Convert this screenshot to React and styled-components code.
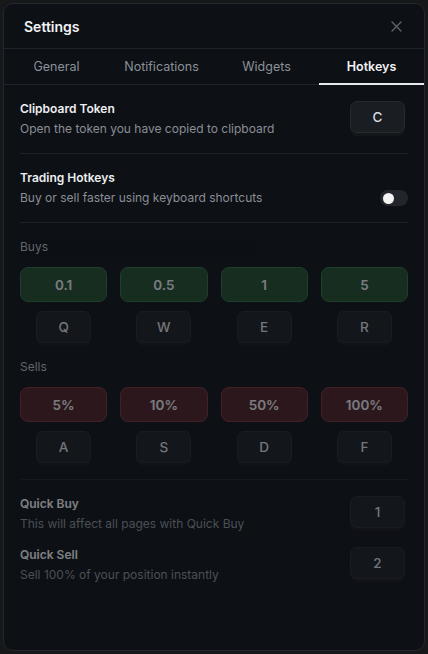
import React, { useState } from "react";
import styled, { createGlobalStyle } from "styled-components";

const GlobalStyle = createGlobalStyle`
    html, body {
        margin: 0;
        padding: 0;
        background: #17181a;
        font-family: Inter, "Noto Sans", sans-serif;
    }
    * {
        box-sizing: border-box;
    }
`;

const buys = [
    { amount: "0.1", key: "Q" },
    { amount: "0.5", key: "W" },
    { amount: "1", key: "E" },
    { amount: "5", key: "R" },
];

const sells = [
    { amount: "5%", key: "A" },
    { amount: "10%", key: "S" },
    { amount: "50%", key: "D" },
    { amount: "100%", key: "F" },
];

const tabs = ["General", "Notifications", "Widgets", "Hotkeys"];

const CloseIcon = () => (
    <svg width="11" height="11" viewBox="0 0 11 11" fill="none">
        <path
            d="M1 1L10 10M10 1L1 10"
            stroke="#62666e"
            strokeWidth="1.3"
            strokeLinecap="round"
        />
    </svg>
);

const App = () => {
    const [tab, setTab] = useState("Hotkeys");
    const [trading, setTrading] = useState(false);

    return (
        <Page>
            <GlobalStyle />
            <Modal>
                <Header>
                    <Title>Settings</Title>
                    <CloseButton>
                        <CloseIcon />
                    </CloseButton>
                </Header>
                <Tabs>
                    {tabs.map((t) => (
                        <Tab
                            key={t}
                            $active={t === tab}
                            onClick={() => setTab(t)}
                        >
                            {t}
                        </Tab>
                    ))}
                </Tabs>
                <Body>
                    <Row>
                        <Text>
                            <RowTitle>Clipboard Token</RowTitle>
                            <RowDesc>
                                Open the token you have copied to clipboard
                            </RowDesc>
                        </Text>
                        <KeyCap $side>C</KeyCap>
                    </Row>
                    <Divider />
                    <Row $end>
                        <Text>
                            <RowTitle>Trading Hotkeys</RowTitle>
                            <RowDesc>
                                Buy or sell faster using keyboard shortcuts
                            </RowDesc>
                        </Text>
                        <Toggle
                            $on={trading}
                            onClick={() => setTrading((p) => !p)}
                        >
                            <Knob />
                        </Toggle>
                    </Row>
                    <Divider />
                    <Dimmed $off={!trading}>
                        <SectionLabel>Buys</SectionLabel>
                        <Grid>
                            {buys.map((b) => (
                                <Cell key={b.key}>
                                    <Amount $kind="buy">{b.amount}</Amount>
                                    <KeyCap>{b.key}</KeyCap>
                                </Cell>
                            ))}
                        </Grid>
                        <SectionLabel>Sells</SectionLabel>
                        <Grid>
                            {sells.map((s) => (
                                <Cell key={s.key}>
                                    <Amount $kind="sell">{s.amount}</Amount>
                                    <KeyCap>{s.key}</KeyCap>
                                </Cell>
                            ))}
                        </Grid>
                        <Divider $top={0} />
                        <QuickRow>
                            <Text>
                                <RowTitle>Quick Buy</RowTitle>
                                <RowDesc>
                                    This will affect all pages with Quick Buy
                                </RowDesc>
                            </Text>
                            <KeyCap $side>1</KeyCap>
                        </QuickRow>
                        <QuickRow>
                            <Text>
                                <RowTitle>Quick Sell</RowTitle>
                                <RowDesc>
                                    Sell 100% of your position instantly
                                </RowDesc>
                            </Text>
                            <KeyCap $side>2</KeyCap>
                        </QuickRow>
                    </Dimmed>
                </Body>
            </Modal>
        </Page>
    );
};

export default App;

const Page = styled.div`
    width: 428px;
    height: 654px;
    padding: 3px;
`;

const Modal = styled.div`
    width: 422px;
    height: 648px;
    background: #0d1015;
    border: 1px solid #22262d;
    border-radius: 10px;
    display: flex;
    flex-direction: column;
    overflow: hidden;
`;

const Header = styled.div`
    height: 45px;
    flex-shrink: 0;
    display: flex;
    align-items: center;
    justify-content: space-between;
    padding: 0 22px 0 20px;
    border-bottom: 1px solid #1f232a;
`;

const Title = styled.h2`
    margin: 0;
    font-size: 14px;
    font-weight: 600;
    color: #f2f3f5;
`;

const CloseButton = styled.button`
    background: none;
    border: none;
    padding: 0;
    display: flex;
    cursor: pointer;
`;

const Tabs = styled.div`
    display: grid;
    grid-template-columns: repeat(4, 1fr);
    height: 36px;
    flex-shrink: 0;
    border-bottom: 1px solid #1f232a;
`;

const Tab = styled.button`
    background: none;
    border: none;
    font-family: inherit;
    font-size: 12.5px;
    font-weight: ${(p) => (p.$active ? 600 : 400)};
    color: ${(p) => (p.$active ? "#f2f3f5" : "#8c9099")};
    border-bottom: 2px solid
        ${(p) => (p.$active ? "#e8e9eb" : "transparent")};
    margin-bottom: -1px;
    padding: 0;
    cursor: pointer;
`;

const Body = styled.div`
    padding: 16px 16px 0 16px;
    display: flex;
    flex-direction: column;
`;

const Row = styled.div`
    display: flex;
    align-items: ${(p) => (p.$end ? "flex-end" : "center")};
    justify-content: space-between;
`;

const QuickRow = styled(Row)`
    margin-bottom: 16px;
`;

const Text = styled.div`
    display: flex;
    flex-direction: column;
    gap: 5px;
`;

const RowTitle = styled.div`
    font-size: 12px;
    line-height: 15px;
    font-weight: 600;
    color: #eceef1;
`;

const RowDesc = styled.div`
    font-size: 12px;
    line-height: 15px;
    color: #8a8e96;
`;

const Divider = styled.div`
    height: 1px;
    flex-shrink: 0;
    background: #1e2228;
    margin: ${(p) => (p.$top ?? 17)}px 0 16px;
`;

const KeyCap = styled.div`
    width: 55px;
    height: 32px;
    margin-bottom: 3px;
    margin-right: ${(p) => (p.$side ? "3px" : "0")};
    display: flex;
    align-items: center;
    justify-content: center;
    background: #1a1d22;
    border: 1px solid #262a31;
    border-radius: 7px;
    box-shadow: 0 3px 0 #15171b;
    color: #d8dade;
    font-size: 13.5px;
    font-weight: 500;
`;

const Toggle = styled.button`
    width: 28px;
    height: 16px;
    border-radius: 8px;
    border: none;
    padding: 0 3px;
    margin-bottom: -1px;
    background: ${(p) => (p.$on ? "#3b82f6" : "#22252b")};
    display: flex;
    justify-content: ${(p) => (p.$on ? "flex-end" : "flex-start")};
    align-items: center;
    cursor: pointer;
`;

const Knob = styled.span`
    width: 11px;
    height: 11px;
    border-radius: 50%;
    background: #f4f4f5;
`;

const Dimmed = styled.div`
    opacity: ${(p) => (p.$off ? 0.5 : 1)};
    display: flex;
    flex-direction: column;
`;

const SectionLabel = styled.div`
    font-size: 12px;
    line-height: 15px;
    color: #b4b8bf;
    margin-bottom: 13px;
`;

const Grid = styled.div`
    display: grid;
    grid-template-columns: repeat(4, 1fr);
    gap: 13px;
    margin: 0 0 13px 0;
`;

const Cell = styled.div`
    display: flex;
    flex-direction: column;
    align-items: center;
    gap: 9px;
`;

const Amount = styled.div`
    width: 100%;
    height: 35px;
    display: flex;
    align-items: center;
    justify-content: center;
    border-radius: 8px;
    font-size: 13.5px;
    font-weight: 600;
    color: #e4e6ea;
    background: ${(p) => (p.$kind === "buy" ? "#1f4a2a" : "#4c1f26")};
    border: 1px solid
        ${(p) => (p.$kind === "buy" ? "#2f6e3e" : "#7a2f38")};
`;
